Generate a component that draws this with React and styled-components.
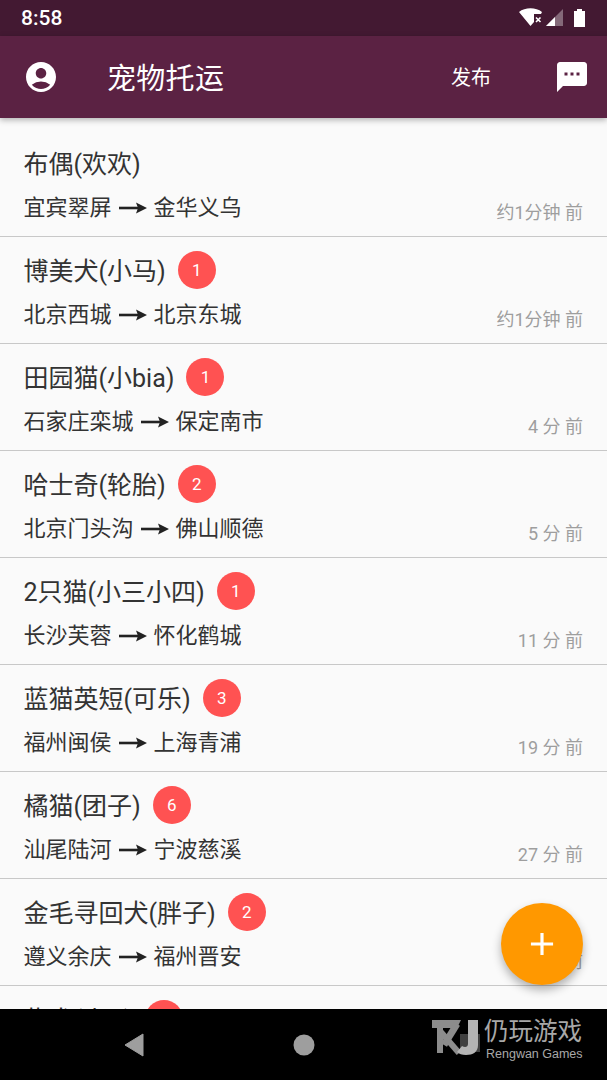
import React from 'react';
import styled, { createGlobalStyle } from 'styled-components';
import { MdAccountCircle, MdTextsms, MdAdd } from 'react-icons/md';

const GlobalStyle = createGlobalStyle`
  html, body {
    margin: 0;
    padding: 0;
    background: #fafafa;
  }
  * {
    box-sizing: border-box;
  }
`;

const Screen = styled.div`
  position: relative;
  width: 607px;
  height: 1080px;
  display: flex;
  flex-direction: column;
  overflow: hidden;
  background: #fafafa;
  font-family: Roboto, "Noto Sans CJK SC", sans-serif;
`;

const StatusBar = styled.div`
  height: 36px;
  flex: none;
  display: flex;
  align-items: center;
  justify-content: space-between;
  padding: 0 21px;
  background: #431932;
  color: #fff;
  font-size: 21px;
  font-weight: 500;
`;

const StatusIcons = styled.div`
  display: flex;
  align-items: center;
`;

const AppBar = styled.header`
  position: relative;
  z-index: 2;
  height: 82px;
  flex: none;
  display: flex;
  align-items: center;
  padding: 0 2px 0 23px;
  background: #5b2243;
  color: #fff;
  box-shadow: 0 2px 6px rgba(0, 0, 0, 0.3);
`;

const Title = styled.h1`
  flex: 1;
  margin: -2px 0 0 48px;
  font-size: 29px;
  font-weight: 400;
  letter-spacing: 0.3px;
`;

const Action = styled.span`
  margin: -2px 63px 0 0;
  font-size: 20px;
`;

const List = styled.main`
  flex: 1;
  min-height: 0;
  overflow: hidden;
  padding-top: 12px;
`;

const Row = styled.div`
  height: 107px;
  padding: 14px 24px 0 23.5px;
  border-bottom: 1px solid #c8c8c8;
`;

const NameLine = styled.div`
  height: 38px;
  display: flex;
  align-items: center;
  color: #333;
  font-size: 25px;
`;

const Name = styled.span`
  margin-top: -2px;
`;

const Badge = styled.span`
  width: 38px;
  height: 38px;
  flex: none;
  display: flex;
  align-items: center;
  justify-content: center;
  margin-left: 12px;
  border-radius: 50%;
  background: #ff5252;
  color: #fff;
  font-size: 17px;
`;

const RouteLine = styled.div`
  display: flex;
  justify-content: space-between;
  align-items: flex-end;
  height: 36px;
  margin-top: 8px;
  color: #333;
  font-size: 22px;
`;

const Route = styled.span`
  display: flex;
  align-items: center;
  line-height: 36px;
`;

const Arrow = styled.svg`
  width: 28px;
  height: 12px;
  margin: 0 7px;
  flex: none;
`;

const Time = styled.span`
  color: #9e9e9e;
  font-size: 18px;
  line-height: 26px;
  white-space: pre;
`;

const Fab = styled.button`
  position: absolute;
  right: 24px;
  top: 903px;
  z-index: 3;
  width: 82px;
  height: 82px;
  display: flex;
  align-items: center;
  justify-content: center;
  padding: 0;
  border: none;
  border-radius: 50%;
  background: #ff9800;
  color: #fff;
  box-shadow: 0 5px 10px rgba(0, 0, 0, 0.3);
`;

const NavBar = styled.nav`
  position: relative;
  z-index: 4;
  height: 71px;
  flex: none;
  display: flex;
  align-items: center;
  background: #000;
  padding-left: 124px;
  gap: 149px;
`;

const Watermark = styled.div`
  position: absolute;
  left: 432px;
  top: 8px;
  display: flex;
  color: #a8a8a8;
`;

const WatermarkText = styled.div`
  margin-left: 2px;
  display: flex;
  flex-direction: column;
`;

const WatermarkCn = styled.span`
  font-size: 24.5px;
  line-height: 29px;
  white-space: nowrap;
`;

const WatermarkEn = styled.span`
  margin: 0 0 0 2px;
  font-family: "Liberation Sans", sans-serif;
  font-size: 12.5px;
  line-height: 16px;
  white-space: nowrap;
`;

const rows = [
  { name: '布偶(欢欢)', from: '宜宾翠屏', to: '金华义乌', time: '约1分钟 前' },
  { name: '博美犬(小马)', badge: 1, from: '北京西城', to: '北京东城', time: '约1分钟 前' },
  { name: '田园猫(小bia)', badge: 1, from: '石家庄栾城', to: '保定南市', time: '4 分 前' },
  { name: '哈士奇(轮胎)', badge: 2, from: '北京门头沟', to: '佛山顺德', time: '5 分 前' },
  { name: '2只猫(小三小四)', badge: 1, from: '长沙芙蓉', to: '怀化鹤城', time: '11 分 前' },
  { name: '蓝猫英短(可乐)', badge: 3, from: '福州闽侯', to: '上海青浦', time: '19 分 前' },
  { name: '橘猫(团子)', badge: 6, from: '汕尾陆河', to: '宁波慈溪', time: '27 分 前' },
  { name: '金毛寻回犬(胖子)', badge: 2, from: '遵义余庆', to: '福州晋安', time: '30 分 前' },
  { name: '柴犬(小Q)', badge: 1 },
];

const StatusGlyphs = () => (
  <StatusIcons>
    <svg width="67" height="20" viewBox="0 0 67 20" fill="#fff">
      <path d="M0 4 C6 -1 17 -1 23 4 L22 6 H15 V14 L11.5 18 Z" />
      <path d="M17 9.5 l4.5 4.5 M21.5 9.5 l-4.5 4.5" stroke="#fff" strokeWidth="1.6" />
      <path d="M27 18 L44 1 V18 Z" fillOpacity="0.35" />
      <path d="M27 18 L36 9 V18 Z" />
      <path d="M55 3 h3 v-2 h5 v2 h3 v16 h-11 Z" />
    </svg>
  </StatusIcons>
);

const Logo = () => (
  <svg width="50" height="42" viewBox="0 0 50 42">
    <path d="M0 3 H29 L25 11 H11 V36 H5 V11 H0 Z" fill="#8c8c8c" />
    <path d="M25 7 L12 28" stroke="#8c8c8c" strokeWidth="7" fill="none" />
    <path d="M8 14 L27 36" stroke="#8c8c8c" strokeWidth="6" fill="none" />
    <path d="M28 17 H48 V35 H28 Z" fill="#fff" fillOpacity="0.25" />
    <path d="M36 3 H46 V28 C46 35 41 38 34 38 C30 38 27 37 25 35 L30 29 C33 31 36 30 36 27 Z" fill="#b4b4b4" />
  </svg>
);

const App = () => (
  <Screen>
    <GlobalStyle />
    <StatusBar>
      <span>8:58</span>
      <StatusGlyphs />
    </StatusBar>
    <AppBar>
      <MdAccountCircle size={36} />
      <Title>宠物托运</Title>
      <Action>发布</Action>
      <MdTextsms size={36} style={{ marginRight: 15 }} />
    </AppBar>
    <List>
      {rows.map((row) => (
        <Row key={row.name}>
          <NameLine>
            <Name>{row.name}</Name>
            {row.badge && <Badge>{row.badge}</Badge>}
          </NameLine>
          {row.from && (
            <RouteLine>
              <Route>
                {row.from}
                <Arrow viewBox="0 0 28 12">
                  <path d="M0 6 H20" stroke="#222" strokeWidth="2.6" />
                  <path d="M17 0.5 L28 6 L17 11.5 L19 6 Z" fill="#222" />
                </Arrow>
                {row.to}
              </Route>
              <Time>{row.time}</Time>
            </RouteLine>
          )}
        </Row>
      ))}
    </List>
    <Fab>
      <MdAdd size={38} />
    </Fab>
    <NavBar>
      <svg width="20" height="24" viewBox="0 0 20 24" fill="#9e9e9e">
        <path d="M19 1 V23 L1 12 Z" stroke="#9e9e9e" strokeWidth="1" strokeLinejoin="round" />
      </svg>
      <svg width="22" height="22" viewBox="0 0 22 22" fill="#9e9e9e">
        <circle cx="11" cy="11" r="10.5" />
      </svg>
      <Watermark>
        <Logo />
        <WatermarkText>
          <WatermarkCn>仍玩游戏</WatermarkCn>
          <WatermarkEn>Rengwan Games</WatermarkEn>
        </WatermarkText>
      </Watermark>
    </NavBar>
  </Screen>
);

export default App;
